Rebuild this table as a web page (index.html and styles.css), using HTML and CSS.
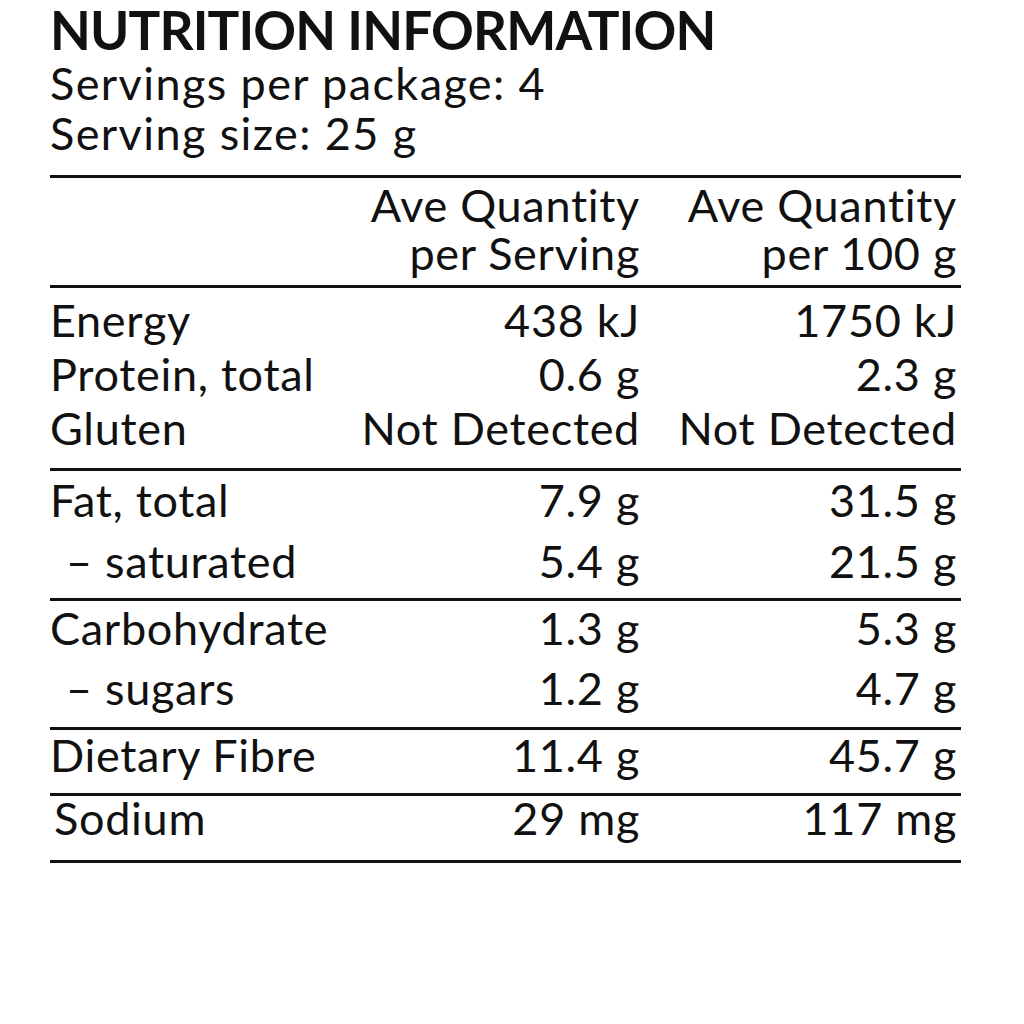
FILE: index.html
```html
<!DOCTYPE html>
<html lang="en">
<head>
<meta charset="utf-8">
<title>Nutrition Information</title>
<link rel="stylesheet" href="styles.css">
</head>
<body>
<main class="panel">
  <h1 class="title">NUTRITION INFORMATION</h1>
  <p class="meta">Servings per package: 4</p>
  <p class="meta">Serving size: 25 g</p>

  <section class="group head">
    <div class="row"><span></span><span class="num">Ave Quantity</span><span class="num">Ave Quantity</span></div>
    <div class="row"><span></span><span class="num">per Serving</span><span class="num">per 100 g</span></div>
  </section>

  <section class="group g-energy">
    <div class="row"><span>Energy</span><span class="num">438 kJ</span><span class="num">1750 kJ</span></div>
    <div class="row"><span>Protein, total</span><span class="num">0.6 g</span><span class="num">2.3 g</span></div>
    <div class="row"><span>Gluten</span><span class="num">Not Detected</span><span class="num">Not Detected</span></div>
  </section>

  <section class="group g-fat">
    <div class="row"><span>Fat, total</span><span class="num">7.9 g</span><span class="num">31.5 g</span></div>
    <div class="row"><span class="sub">– saturated</span><span class="num">5.4 g</span><span class="num">21.5 g</span></div>
  </section>

  <section class="group g-carb">
    <div class="row"><span>Carbohydrate</span><span class="num">1.3 g</span><span class="num">5.3 g</span></div>
    <div class="row"><span class="sub">– sugars</span><span class="num">1.2 g</span><span class="num">4.7 g</span></div>
  </section>

  <section class="group g-fibre">
    <div class="row"><span>Dietary Fibre</span><span class="num">11.4 g</span><span class="num">45.7 g</span></div>
  </section>

  <section class="group g-sodium">
    <div class="row"><span class="sodium">Sodium</span><span class="num">29 mg</span><span class="num">117 mg</span></div>
  </section>
</main>
</body>
</html>
```

FILE: styles.css
```css
html, body {
  margin: 0;
  padding: 0;
  background: #ffffff;
}

body {
  font-family: Lato, "Liberation Sans", sans-serif;
  color: #111111;
  font-variant-ligatures: none;
  font-feature-settings: "liga" 0, "clig" 0;
}

.panel {
  width: 911px;
  margin-left: 50px;
  padding-top: 4px;
}

.title {
  margin: 0;
  font-size: 53px;
  font-weight: 700;
  line-height: 52px;
  letter-spacing: -0.85px;
  margin-bottom: 2px;
}

.meta {
  margin: 0;
  font-size: 45px;
  line-height: 50px;
  letter-spacing: 1.4px;
}

.meta + .meta {
  margin-bottom: 17px;
}

.group {
  border-top: 3px solid #111111;
  display: grid;
  font-size: 45px;
  letter-spacing: 0.7px;
}

.g-sodium {
  border-bottom: 3px solid #111111;
}

.row {
  display: grid;
  grid-template-columns: 300px 290px 317px;
  padding-right: 3px;
}

.num {
  text-align: right;
  white-space: nowrap;
}

.sub {
  padding-left: 16px;
}

.sodium {
  padding-left: 4px;
}

.head {
  padding: 3px 0 8px;
  line-height: 48px;
}

.g-energy {
  padding: 5px 0 13px;
  line-height: 54px;
}

.g-fat {
  padding: 2px 0 10px;
  line-height: 54px;
  row-gap: 7px;
}

.g-carb {
  padding: 0 0 12px;
  line-height: 54px;
  row-gap: 6px;
}

.g-fibre {
  padding: 0 0 13px;
  line-height: 50px;
}

.g-sodium {
  padding: 0 0 20px;
  line-height: 44px;
}
```
